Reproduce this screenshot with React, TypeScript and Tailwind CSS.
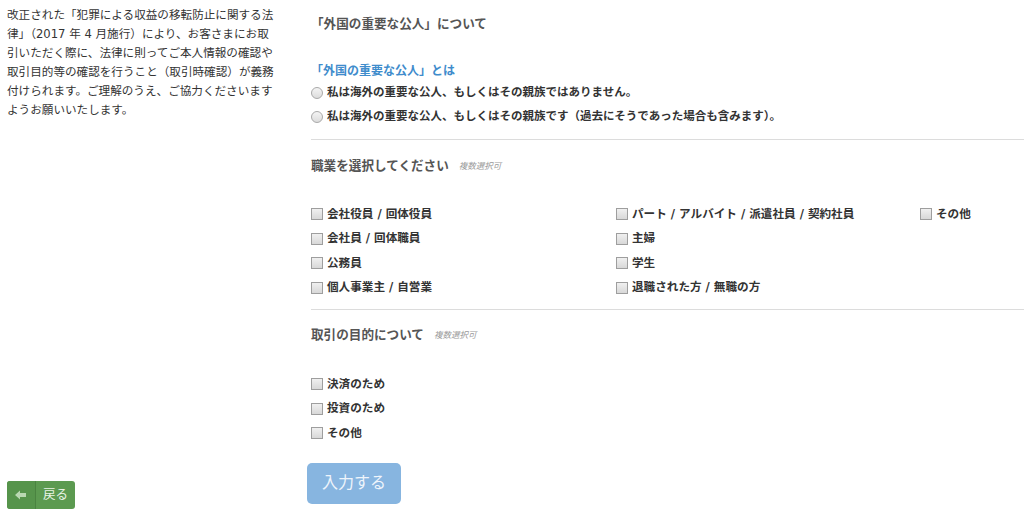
import React from "react";

const FONT = { fontFamily: '"DejaVu Sans", "Noto Sans CJK JP", "Noto Sans", sans-serif' };

function Radio() {
  return (
    <span className="inline-block w-[12px] h-[12px] rounded-full border border-[#a9a9a9] bg-gradient-to-b from-[#f4f4f4] to-[#dcdcdc] mr-[4px] shrink-0" />
  );
}

function Check() {
  return (
    <span className="inline-block w-[12px] h-[12px] border border-[#9e9e9e] bg-gradient-to-b from-[#f0f0f0] to-[#d8d8d8] mr-[4px] shrink-0" />
  );
}

function CheckRow({ label }: { label: string }) {
  return (
    <div className="h-[24.5px] flex items-center text-[11.6px] font-bold text-[#333]">
      <Check />
      <span>{label}</span>
    </div>
  );
}

export default function App() {
  return (
    <div className="w-[1024px] h-[515px] flex bg-white overflow-hidden" style={FONT}>
      <div className="w-[304px] shrink-0 flex flex-col justify-between pl-[7px] pt-[6px] pb-[6px]">
        <p className="text-[11.6px] leading-[19px] text-[#333]">
          改正された「犯罪による収益の移転防止に関する法
          <br />
          律」（2017 年 4 月施行）により、お客さまにお取
          <br />
          引いただく際に、法律に則ってご本人情報の確認や
          <br />
          取引目的等の確認を行うこと（取引時確認）が義務
          <br />
          付けられます。ご理解のうえ、ご協力くださいます
          <br />
          ようお願いいたします。
        </p>
        <div className="flex w-[68px] h-[28px] rounded-[3px] bg-[#5c9a50] overflow-hidden">
          <div className="w-[29px] h-full flex items-center justify-center border-r border-[#4a8340] bg-[#56944b]">
            <svg width="12" height="10" viewBox="0 0 12 10">
              <path d="M0 5 L5 0.5 L5 3 L11 3 L11 7 L5 7 L5 9.5 Z" fill="#b9d8b1" />
            </svg>
          </div>
          <div className="flex-1 flex items-center justify-center text-[12.5px] text-[#eaf4e6]">
            戻る
          </div>
        </div>
      </div>

      <div className="flex-1 pl-[7px] flex flex-col">
        <div className="mt-[14px] h-[20px] leading-[20px] text-[12.6px] font-bold text-[#555]">
          「外国の重要な公人」について
        </div>
        <div className="mt-[28px] h-[18px] leading-[18px] text-[12px] font-bold text-[#3f8ccc]">
          「外国の重要な公人」とは
        </div>
        <div className="mt-[1px] h-[24px] flex items-center text-[11.5px] font-bold text-[#333]">
          <Radio />
          <span>私は海外の重要な公人、もしくはその親族ではありません。</span>
        </div>
        <div className="h-[24px] flex items-center text-[11.5px] font-bold text-[#333]">
          <Radio />
          <span>私は海外の重要な公人、もしくはその親族です（過去にそうであった場合も含みます）。</span>
        </div>
        <div className="mt-[10px] border-t border-[#dcdcdc]" />

        <div className="mt-[16px] h-[20px] flex items-center">
          <span className="text-[12.6px] font-bold text-[#555]">職業を選択してください</span>
          <span className="ml-[10px] text-[8.5px] italic text-[#999]">複数選択可</span>
        </div>
        <div className="mt-[26px] grid grid-cols-[305px_304px_1fr]">
          <div className="flex flex-col">
            <CheckRow label="会社役員 / 回体役員" />
            <CheckRow label="会社員 / 回体職員" />
            <CheckRow label="公務員" />
            <CheckRow label="個人事業主 / 自営業" />
          </div>
          <div className="flex flex-col">
            <CheckRow label="パート / アルバイト / 派遣社員 / 契約社員" />
            <CheckRow label="主婦" />
            <CheckRow label="学生" />
            <CheckRow label="退職された方 / 無職の方" />
          </div>
          <div className="flex flex-col">
            <CheckRow label="その他" />
          </div>
        </div>
        <div className="mt-[9px] border-t border-[#dcdcdc]" />

        <div className="mt-[15px] h-[20px] flex items-center">
          <span className="text-[12.6px] font-bold text-[#555]">取引の目的について</span>
          <span className="ml-[10px] text-[8.5px] italic text-[#999]">複数選択可</span>
        </div>
        <div className="mt-[27px] flex flex-col">
          <CheckRow label="決済のため" />
          <CheckRow label="投資のため" />
          <CheckRow label="その他" />
        </div>
        <div className="mt-[17px] -ml-[4px] w-[94px] h-[41px] rounded-[5px] bg-[#87b5e0] flex items-center justify-center text-[16px] text-[#eef4fb]">
          入力する
        </div>
      </div>
    </div>
  );
}
